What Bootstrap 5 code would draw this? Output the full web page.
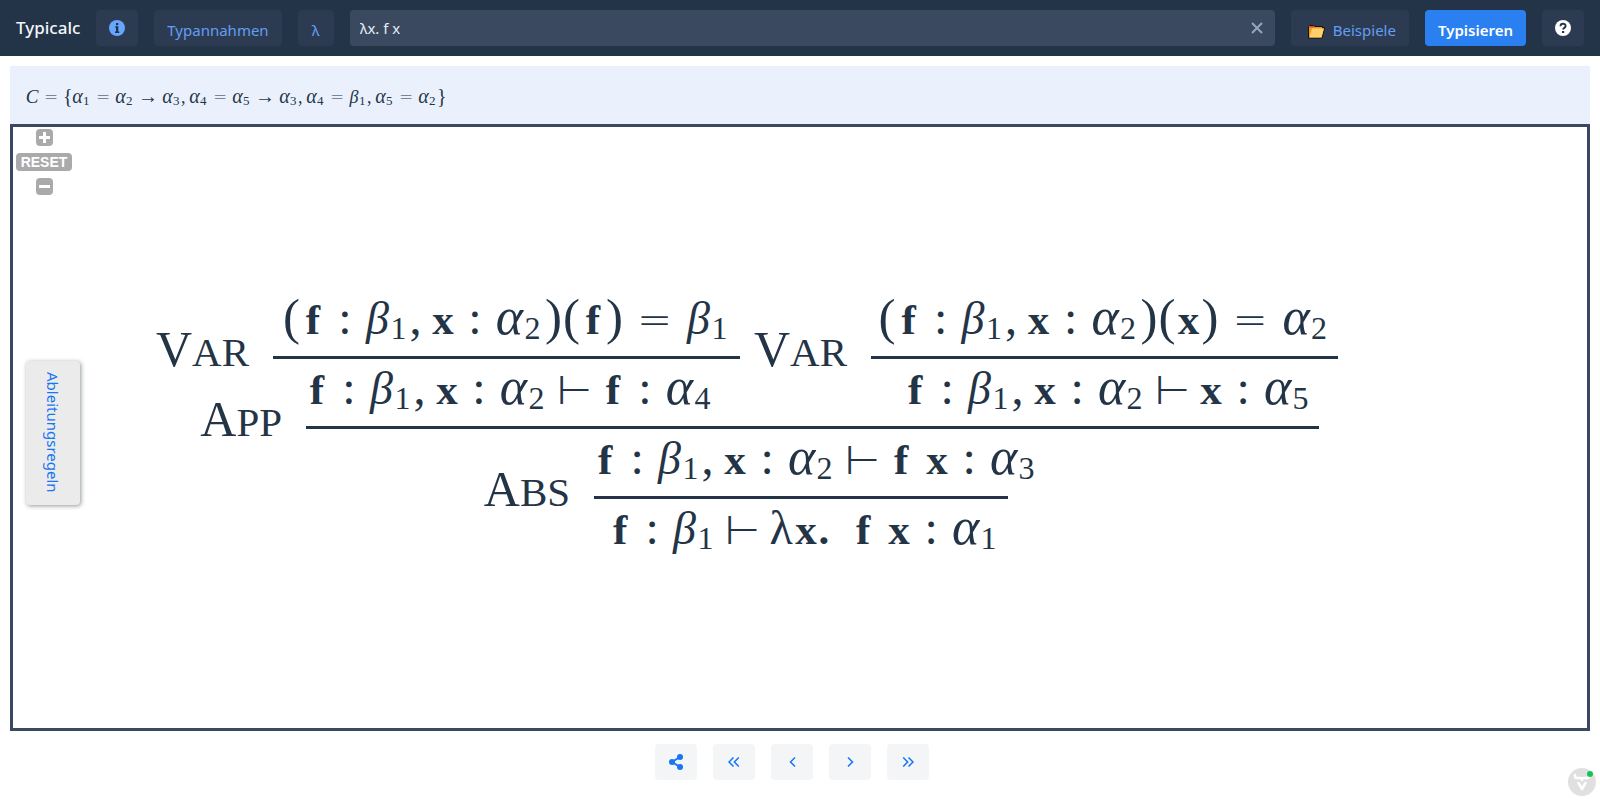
<!DOCTYPE html>
<html lang="de">
<head>
<meta charset="utf-8">
<meta name="viewport" content="width=device-width, initial-scale=1">
<title>Typicalc</title>
<link href="https://cdn.jsdelivr.net/npm/bootstrap@5.3.0/dist/css/bootstrap.min.css" rel="stylesheet">
<style>
body { font-family: "Noto Sans", sans-serif; font-size: 15px; color: #243447; }
.topbar { background: #233348; height: 56px; }
.brand { font-size: 17px; font-weight: 500; color: #f2f6fb; line-height: 24px; }
.tool { height: 36px; min-width: 36px; border: 0; border-radius: 4px; background: #2d3b52; color: #619ff1; padding: 4px 13px 0; line-height: 32px; white-space: nowrap; }
.tool-icon { width: 42px; padding: 0; display: flex; align-items: center; justify-content: center; flex: none; line-height: 1; }
.tool-main { background: #2a80f0; color: #fff; font-weight: 600; }
.term { background: #3a495f; border-radius: 4px; height: 36px; }
.term input { background: transparent; border: 0; outline: 0; color: #e6edf6; padding: 0 10px; height: 36px; }
.term button { background: transparent; border: 0; padding: 0 0 3px; width: 36px; }
.board { padding: 10px 10px 0; }
.constraints { background: #eaf1fd; height: 58px; padding: 19px 15px 0; overflow: hidden; }
.stage { border: 3px solid #3a4961; padding: 0 106px 3px 0; overflow: hidden; }
.zoomer { left: 3px; top: 2px; gap: 7px; }
.zoomer button { background: #aaa; color: #fff; border: 0; border-radius: 4px; padding: 0; height: 17px; min-width: 17px; font: bold 14px/17px "Liberation Sans", sans-serif; display: flex; align-items: center; justify-content: center; }
.zoomer .reset { width: 56px; height: 18px; }
.sidetab { left: 13px; top: calc(50% + 5px); width: 54px; height: 144px; border: 0; border-radius: 4px; background: #ebebeb; color: #1676f3; writing-mode: vertical-rl; padding: 0; box-shadow: 1px 1px 4px rgba(40, 50, 60, .5); }
.steps { padding: 13px 16px 20px 0; }
.stepbtn { width: 42px; height: 36px; border: 0; border-radius: 4px; background: #f3f5f7; color: #1676f3; padding: 0; display: flex; align-items: center; justify-content: center; }
.devtools { right: 4px; bottom: 4px; border: 0; padding: 0; background: transparent; line-height: 0; }

/* formulas: every atom sits in a cell as wide as its math class */
.math { font-family: "Liberation Serif", serif; white-space: nowrap; font-size: 48px; line-height: 57px; }
.math > * { display: inline-block; text-align: center; line-height: 1; }
.math b { font-weight: bold; font-size: 43px; width: 25px; }
.math i { width: 30px; font-size: 52px; }
.math .be { width: 26px; font-size: 46px; }
.math sub { width: 20px; font-size: 32px; text-align: left; line-height: 0; bottom: -.15em; }
.math .be + sub { width: 19px; }
.math .col { width: 39px; }
.math .com { width: 21px; text-align: left; }
.math .par { width: 18px; font-size: 51px; }
.math .eql { width: 62px; font: 200 42px/42px "DejaVu Sans", sans-serif; }
.math .trn { width: 52px; font: 200 40px/40px "DejaVu Sans", sans-serif; }
.math .lam { width: 25px; }
.math .spc { width: 11px; }
.math .dot { width: 32px; text-align: left; }

.math-sm { font-size: 18px; line-height: 24px; }
.math-sm i { width: 11px; font-size: 20px; }
.math-sm .be { width: 10px; font-size: 18px; }
.math-sm .cap { width: 14px; font-size: 19px; }
.math-sm sub, .math-sm .be + sub { width: 8px; font-size: 13px; }
.math-sm .com { width: 8px; }
.math-sm .par { width: 9px; font-size: 20px; }
.math-sm .eql { width: 24px; font-size: 17px; line-height: 17px; }
.math-sm .arr { width: 28px; font-size: 20px; }

/* derivation tree */
.rule-row { display: flex; align-items: flex-start; }
.rule-name { font: 50px/48px "Liberation Serif", serif; margin: -31px 24px 0 0; }
.rule-name small { font-size: 41px; }
.bar-line { border-top: 3px solid #243447; height: 70px; text-align: center; padding-left: 6px; }
.premise { height: 70px; padding-top: 3px; text-align: center; }
.leaf { width: 467px; }
.leaf-row { gap: 14px; }
.leaf-row .rule-name { margin-top: 39px; }
.app-row { margin-right: 19px; }
.app-row .bar-line { width: 1013px; }
.abs-row { margin-right: 330px; }
.abs-row .bar-line { width: 414px; }
</style>
</head>
<body class="min-vh-100 d-flex flex-column bg-white">
<header class="topbar d-flex align-items-center gap-3 px-3">
  <span class="brand">Typicalc</span>
  <button class="tool tool-icon" type="button" aria-label="Info"><svg width="16" height="16" viewBox="0 0 16 16"><circle cx="8" cy="8" r="8" fill="#66a6ff"/><path d="M7 3h2.300v2.200H7zM6.300 6.300h3v5.200h1V13H6v-1.500h1V7.700h-.7z" fill="#233348"/></svg></button>
  <button class="tool" type="button">Typannahmen</button>
  <button class="tool" type="button">λ</button>
  <div class="term d-flex flex-grow-1">
    <input class="flex-grow-1" type="text" aria-label="Term" value="λx. f x">
    <button type="button" aria-label="Löschen"><svg width="12" height="12" viewBox="0 0 12 12"><path d="M1 1l10 10M11 1L1 11" stroke="#94a5bd" stroke-width="2"/></svg></button>
  </div>
  <button class="tool" type="button"><svg class="ms-1 me-2" width="17" height="14" viewBox="0 0 17 14"><path d="M.5 13V1.500l1-1h4l1 1h8v1.500h2l-2.500 10z" fill="#e8a018" stroke="#111"/><path d="M1.500 1h4v1.500h-4z" fill="#e8442a"/><path d="M4 3.500h12l-2.500 9H1.500z" fill="#ffd06b"/></svg>Beispiele</button>
  <button class="tool tool-main" type="button">Typisieren</button>
  <button class="tool tool-icon" type="button" aria-label="Hilfe"><svg width="16" height="16" viewBox="0 0 16 16"><circle cx="8" cy="8" r="8" fill="#fff"/><path d="M5.500 6.200C5.500 3 10.600 3.100 10.600 6c0 1.900-2.500 1.800-2.500 3.600" fill="none" stroke="#233348" stroke-width="1.900"/><path d="M7 11h2.200v2H7z" fill="#233348"/></svg></button>
</header>

<main class="board flex-grow-1 d-flex flex-column">
  <section class="constraints">
    <div class="math math-sm"><i class="cap">C</i><span class="eql">=</span><span class="par">{</span><i>α</i><sub>1</sub><span class="eql">=</span><i>α</i><sub>2</sub><span class="arr">→</span><i>α</i><sub>3</sub><span class="com">,</span><i>α</i><sub>4</sub><span class="eql">=</span><i>α</i><sub>5</sub><span class="arr">→</span><i>α</i><sub>3</sub><span class="com">,</span><i>α</i><sub>4</sub><span class="eql">=</span><i class="be">β</i><sub>1</sub><span class="com">,</span><i>α</i><sub>5</sub><span class="eql">=</span><i>α</i><sub>2</sub><span class="par">}</span></div>
  </section>
  <section class="stage position-relative flex-grow-1 d-flex align-items-center justify-content-center">
    <div class="d-flex flex-column align-items-end">
      <div class="leaf-row d-flex">
        <div class="rule-row">
          <div class="rule-name">V<small>AR</small></div>
          <div class="leaf">
            <div class="premise math"><span class="par">(</span><b>f</b><span class="col">:</span><i class="be">β</i><sub>1</sub><span class="com">,</span><b>x</b><span class="col">:</span><i>α</i><sub>2</sub><span class="par">)</span><span class="par">(</span><b>f</b><span class="par">)</span><span class="eql">=</span><i class="be">β</i><sub>1</sub></div>
            <div class="bar-line math"><b>f</b><span class="col">:</span><i class="be">β</i><sub>1</sub><span class="com">,</span><b>x</b><span class="col">:</span><i>α</i><sub>2</sub><span class="trn">⊢</span><b>f</b><span class="col">:</span><i>α</i><sub>4</sub></div>
          </div>
        </div>
        <div class="rule-row">
          <div class="rule-name">V<small>AR</small></div>
          <div class="leaf">
            <div class="premise math"><span class="par">(</span><b>f</b><span class="col">:</span><i class="be">β</i><sub>1</sub><span class="com">,</span><b>x</b><span class="col">:</span><i>α</i><sub>2</sub><span class="par">)</span><span class="par">(</span><b>x</b><span class="par">)</span><span class="eql">=</span><i>α</i><sub>2</sub></div>
            <div class="bar-line math"><b>f</b><span class="col">:</span><i class="be">β</i><sub>1</sub><span class="com">,</span><b>x</b><span class="col">:</span><i>α</i><sub>2</sub><span class="trn">⊢</span><b>x</b><span class="col">:</span><i>α</i><sub>5</sub></div>
          </div>
        </div>
      </div>
      <div class="rule-row app-row">
        <div class="rule-name">A<small>PP</small></div>
        <div class="bar-line math"><b>f</b><span class="col">:</span><i class="be">β</i><sub>1</sub><span class="com">,</span><b>x</b><span class="col">:</span><i>α</i><sub>2</sub><span class="trn">⊢</span><b>f</b><span class="spc"></span><b>x</b><span class="col">:</span><i>α</i><sub>3</sub></div>
      </div>
      <div class="rule-row abs-row">
        <div class="rule-name">A<small>BS</small></div>
        <div class="bar-line math"><b>f</b><span class="col">:</span><i class="be">β</i><sub>1</sub><span class="trn">⊢</span><span class="lam">λ</span><b>x</b><b class="dot">.</b><b>f</b><span class="spc"></span><b>x</b><span class="col">:</span><i>α</i><sub>1</sub></div>
      </div>
    </div>

    <div class="zoomer position-absolute d-flex flex-column align-items-center">
      <button type="button" aria-label="Vergrößern"><svg width="13" height="13" viewBox="0 0 13 13"><path d="M6.500 1v11M1 6.500h11" stroke="#fff" stroke-width="3"/></svg></button>
      <button class="reset" type="button">RESET</button>
      <button type="button" aria-label="Verkleinern"><svg width="13" height="13" viewBox="0 0 13 13"><path d="M1 6.500h11" stroke="#fff" stroke-width="3"/></svg></button>
    </div>
    <button class="sidetab position-absolute translate-middle-y" type="button">Ableitungsregeln</button>
  </section>
</main>

<footer class="steps d-flex justify-content-center gap-3">
  <button class="stepbtn" type="button" aria-label="Teilen"><svg width="14" height="16" viewBox="0 0 14 16"><path d="M11 3L3 8l8 5" fill="none" stroke="currentColor" stroke-width="2"/><circle cx="11" cy="3" r="3" fill="currentColor"/><circle cx="3" cy="8" r="3" fill="currentColor"/><circle cx="11" cy="13" r="3" fill="currentColor"/></svg></button>
  <button class="stepbtn" type="button" aria-label="Zum Anfang"><svg width="12" height="10" viewBox="0 0 12 10"><path d="M5.500 0.500L1 5l4.500 4.500M10.800 0.500L6.300 5l4.500 4.500" fill="none" stroke="currentColor" stroke-width="1.500"/></svg></button>
  <button class="stepbtn" type="button" aria-label="Zurück"><svg width="7" height="10" viewBox="0 0 7 10"><path d="M6 0.500L1.500 5 6 9.500" fill="none" stroke="currentColor" stroke-width="1.500"/></svg></button>
  <button class="stepbtn" type="button" aria-label="Weiter"><svg width="7" height="10" viewBox="0 0 7 10"><path d="M1 0.500L5.500 5 1 9.500" fill="none" stroke="currentColor" stroke-width="1.500"/></svg></button>
  <button class="stepbtn" type="button" aria-label="Zum Ende"><svg width="12" height="10" viewBox="0 0 12 10"><path d="M1.200 0.500L5.700 5 1.200 9.500M6.500 0.500L11 5 6.500 9.500" fill="none" stroke="currentColor" stroke-width="1.500"/></svg></button>
</footer>
<button class="devtools position-fixed" type="button" aria-label="Entwicklerwerkzeuge"><svg width="28" height="28" viewBox="0 0 28 28"><circle cx="14" cy="14" r="14" fill="#e0e0e0"/><path d="M7 7v1.500q0 1.500 1.500 1.500h4q1.500 0 1.500 2 0-2 1.500-2h4q1.500 0 1.500-1.500M10.500 15l3.500 6 3.500-6" fill="none" stroke="#fff" stroke-width="2.500" stroke-linecap="round" stroke-linejoin="round"/><circle cx="22" cy="6" r="3" fill="#15c35b"/></svg></button>
<script src="https://cdn.jsdelivr.net/npm/bootstrap@5.3.0/dist/js/bootstrap.bundle.min.js"></script>
</body>
</html>
